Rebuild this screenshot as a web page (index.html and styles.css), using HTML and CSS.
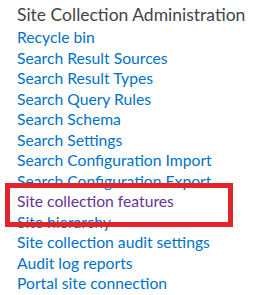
FILE: index.html
```html
<!DOCTYPE html>
<html lang="en">
<head>
    <meta charset="UTF-8">
    <title>Site Settings</title>
    <link rel="stylesheet" href="styles.css">
</head>
<body>
<div class="settings-group">
    <h3 class="group-title">Site Collection Administration</h3>
    <ul class="link-list">
        <li><a href="#">Recycle bin</a></li>
        <li><a href="#">Search Result Sources</a></li>
        <li><a href="#">Search Result Types</a></li>
        <li><a href="#">Search Query Rules</a></li>
        <li><a href="#">Search Schema</a></li>
        <li><a href="#">Search Settings</a></li>
        <li><a href="#">Search Configuration Import</a></li>
        <li><a href="#">Search Configuration Export</a></li>
        <li><a href="#" class="visited">Site collection features</a></li>
        <li><a href="#">Site hierarchy</a></li>
        <li><a href="#">Site collection audit settings</a></li>
        <li><a href="#">Audit log reports</a></li>
        <li><a href="#">Portal site connection</a></li>
    </ul>
    <!-- highlight around the features link -->
    <div class="highlight"></div>
</div>
</body>
</html>
```

FILE: styles.css
```css
body {
    margin: 0;
    padding: 0;
    background: #fff;
    font-family: Lato, 'Open Sans', sans-serif;
}

.settings-group {
    position: relative;
    padding: 3px 0 0 17px;
}

.group-title {
    margin: 0;
    font-size: 17.5px;
    font-weight: 400;
    line-height: 24px;
    white-space: nowrap;
    color: #444;
}

.link-list {
    list-style: none;
    margin: 0;
    padding: 0;
}

.link-list li {
    font-size: 15.7px;
    line-height: 20.5px;
    white-space: nowrap;
}

.link-list a {
    color: #0072c6;
    text-decoration: none;
}

.link-list a.visited {
    color: #663399;
}

.highlight {
    position: absolute;
    left: 5px;
    top: 183px;
    width: 218px;
    height: 34px;
    border: 5px solid #e3242b;
}
```
